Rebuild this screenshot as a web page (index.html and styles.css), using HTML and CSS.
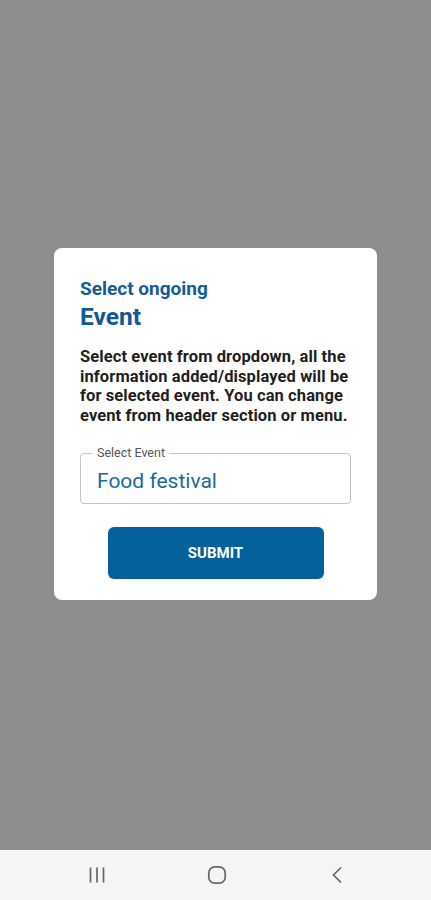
FILE: index.html
```html
<!DOCTYPE html>
<html lang="en">
<head>
    <meta charset="UTF-8">
    <meta name="viewport" content="width=device-width, initial-scale=1.0">
    <title>Select Event</title>
    <link rel="stylesheet" href="styles.css">
</head>
<body>
    <div class="screen">
        <div class="dialog">
            <div class="subtitle">Select ongoing</div>
            <h1>Event</h1>
            <p class="info">Select event from dropdown, all the information added/displayed will be for selected event. You can change event from header section or menu.</p>
            <fieldset class="field">
                <legend>Select Event</legend>
                <div class="value">Food festival</div>
            </fieldset>
            <button class="submit">SUBMIT</button>
        </div>
    </div>
    <div class="navbar">
        <svg width="18" height="18" viewBox="0 0 18 18"><path d="M2.5 1.5v15M9 1.5v15M15.5 1.5v15" stroke="#666" stroke-width="1.7" fill="none"/></svg>
        <svg width="20" height="20" viewBox="0 0 20 20"><rect x="1.8" y="1.8" width="16.4" height="16.4" rx="6" stroke="#666" stroke-width="1.7" fill="none"/></svg>
        <svg width="18" height="18" viewBox="0 0 18 18"><path d="M13 1.5L5.5 9l7.5 7.5" stroke="#666" stroke-width="1.7" fill="none"/></svg>
    </div>
</body>
</html>
```

FILE: styles.css
```css
body {
    font-family: Roboto, "Liberation Sans", sans-serif;
    background-color: #8e8e8e;
    margin: 0;
    height: 900px;
    display: flex;
    flex-direction: column;
}
.screen {
    flex: 1;
    display: flex;
    justify-content: center;
    align-items: center;
    padding-bottom: 2px;
}
.dialog {
    width: 323px;
    box-sizing: border-box;
    background: #fff;
    border-radius: 8px;
    padding: 30px 26px 21px;
}
.subtitle {
    color: #135c97;
    font-size: 19px;
    font-weight: 700;
    line-height: 22px;
}
h1 {
    color: #0f5a96;
    font-size: 24.5px;
    font-weight: 700;
    line-height: 30px;
    margin: 2px 0 0;
}
.info {
    color: #1f1f1f;
    font-size: 16.5px;
    font-weight: 700;
    letter-spacing: 0.1px;
    line-height: 19.5px;
    margin: 15px 0 0;
}
.field {
    margin: 22px 0 0;
    border: 1px solid #c4c4c4;
    border-radius: 4px;
    padding: 0 16px 0;
    height: 57px;
    box-sizing: border-box;
}
.field legend {
    font-size: 12.5px;
    color: #555;
    padding: 0 4px;
    margin-left: -4px;
    line-height: 12px;
}
.value {
    color: #1b6a9b;
    font-size: 21px;
    line-height: 26px;
    margin-top: 9px;
}
.submit {
    display: block;
    width: 216px;
    height: 52px;
    margin: 23px auto 0;
    border: none;
    border-radius: 6px;
    background-color: #05619c;
    color: #fff;
    font-family: Roboto, "Liberation Sans", sans-serif;
    font-size: 15px;
    font-weight: 700;
}
.navbar {
    height: 50px;
    background: #f5f5f5;
    display: grid;
    grid-template-columns: repeat(3, 120px);
    justify-content: center;
    justify-items: center;
    align-items: center;
    padding-left: 3px;
}
```
